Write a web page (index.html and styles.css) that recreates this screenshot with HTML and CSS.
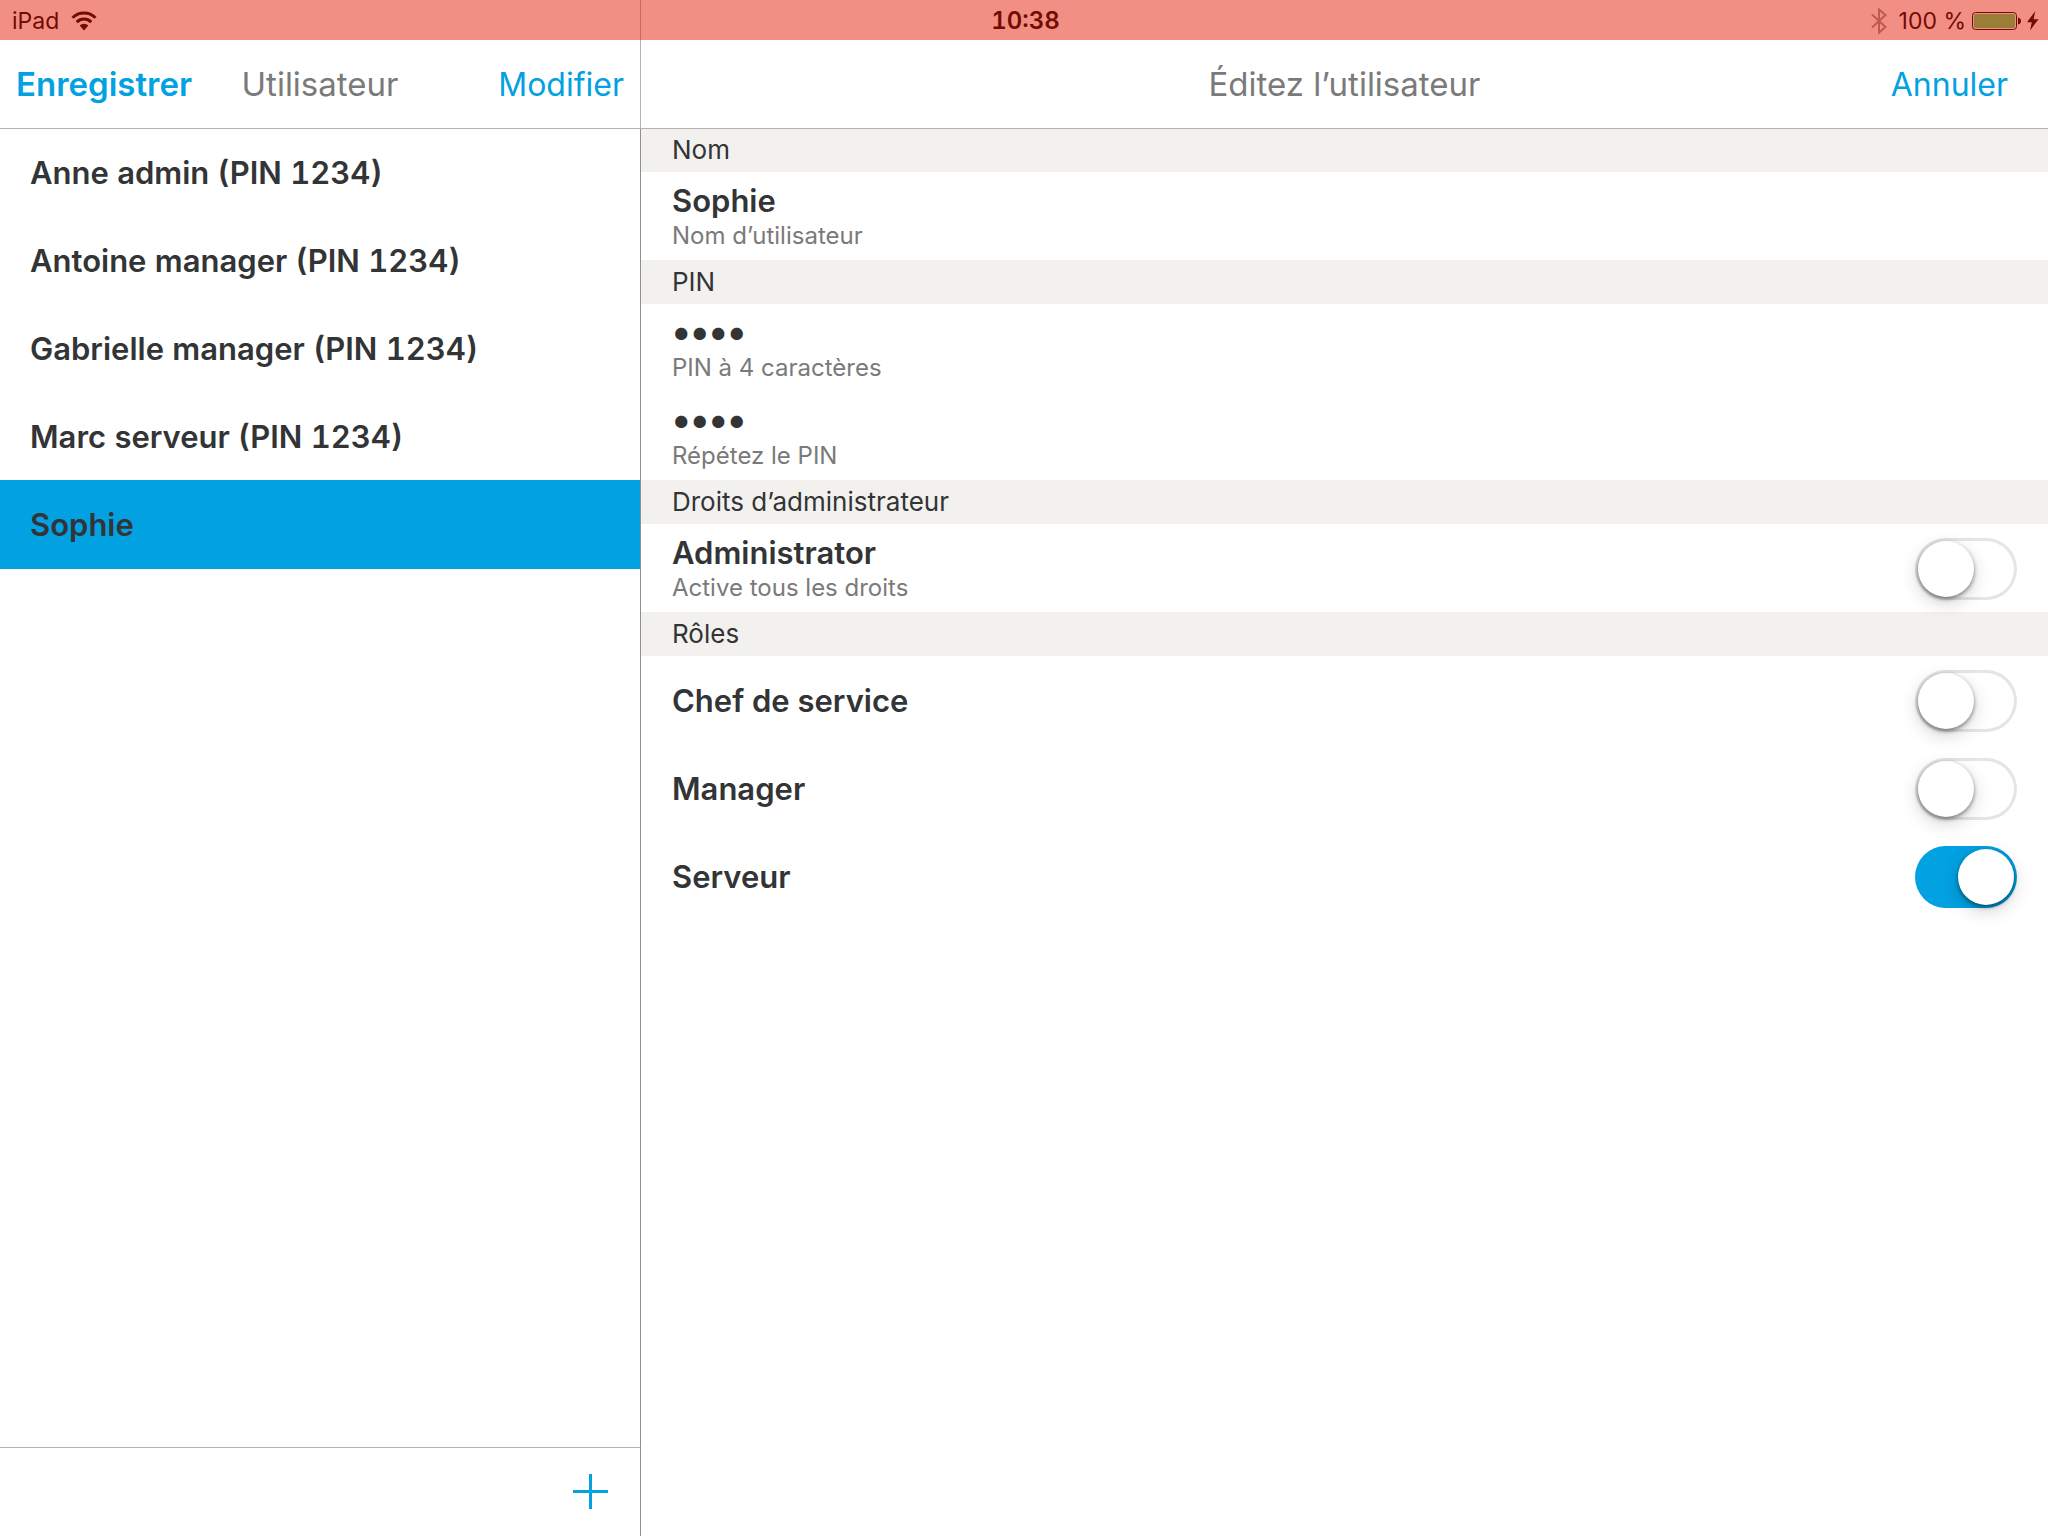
FILE: index.html
```html
<!DOCTYPE html>
<html lang="fr">
<head>
<meta charset="utf-8">
<meta name="viewport" content="width=device-width, initial-scale=1">
<title>Utilisateur</title>
<link rel="stylesheet" href="styles.css">
</head>
<body>
<div class="app">
  <div class="status-bar">
    <div class="status-left">
      <span>iPad</span>
      <svg class="wifi" viewBox="0 0 26 20" width="26" height="20" aria-hidden="true">
        <g fill="none" stroke="currentColor" stroke-width="3">
          <path d="M1.500 6.700a16.400 16.400 0 0 1 23 0"/>
          <path d="M5.700 11.100a10.400 10.400 0 0 1 14.600 0"/>
        </g>
        <path fill="currentColor" d="M8.600 14.600a6.400 6.400 0 0 1 8.800 0L13 19.400z"/>
      </svg>
    </div>
    <time class="clock">10:38</time>
    <div class="status-right">
      <svg class="bluetooth" viewBox="0 0 16 28" width="16" height="28" aria-hidden="true">
        <path fill="none" stroke="currentColor" stroke-width="2" d="M1 7.500l13.500 12.500L8 25.500V2.500l6.500 5.500L1 20.500"/>
      </svg>
      <span>100 %</span>
      <svg class="battery" viewBox="0 0 50 20" width="50" height="20" aria-hidden="true">
        <rect x="0.500" y="1.500" width="44" height="17" rx="3" fill="none" stroke="currentColor"/>
        <rect x="2" y="3" width="41" height="14" rx="1.500" fill="#997e38"/>
        <path fill="currentColor" d="M46 6.500c4 .5 4 6.500 0 7z"/>
      </svg>
      <svg class="bolt" viewBox="0 0 12 20" width="12" height="20" aria-hidden="true">
        <path fill="currentColor" d="M8.300 0L0 11.200h4.800L3 19.500l8.600-11.300H6.600z"/>
      </svg>
    </div>
  </div>

  <aside class="master">
    <header class="nav-bar">
      <button class="nav-button strong" type="button">Enregistrer</button>
      <h1 class="nav-title">Utilisateur</h1>
      <button class="nav-button end" type="button">Modifier</button>
    </header>
    <ul class="user-list">
      <li><button class="user" type="button">Anne admin (PIN 1234)</button></li>
      <li><button class="user" type="button">Antoine manager (PIN 1234)</button></li>
      <li><button class="user" type="button">Gabrielle manager (PIN 1234)</button></li>
      <li><button class="user" type="button">Marc serveur (PIN 1234)</button></li>
      <li><button class="user selected" type="button" aria-current="true">Sophie</button></li>
    </ul>
    <footer class="toolbar">
      <button class="add" type="button" aria-label="Ajouter">
        <svg viewBox="0 0 35 35" width="35" height="35" aria-hidden="true">
          <path fill="currentColor" d="M16 0h3v16h16v3H19v16h-3V19H0v-3h16z"/>
        </svg>
      </button>
    </footer>
  </aside>

  <main class="detail">
    <header class="nav-bar">
      <h2 class="nav-title">Éditez l’utilisateur</h2>
      <button class="nav-button end" type="button">Annuler</button>
    </header>
    <form class="form">
      <h3 class="section">Nom</h3>
      <div class="row field">
        <input class="value" id="name" type="text" value="Sophie">
        <label class="hint" for="name">Nom d’utilisateur</label>
      </div>
      <h3 class="section">PIN</h3>
      <div class="row field">
        <input class="value pin" id="pin" type="password" value="1234">
        <label class="hint" for="pin">PIN à 4 caractères</label>
      </div>
      <div class="row field">
        <input class="value pin" id="pin-repeat" type="password" value="1234">
        <label class="hint" for="pin-repeat">Répétez le PIN</label>
      </div>
      <h3 class="section">Droits d’administrateur</h3>
      <label class="row option">
        <span class="field">
          <span class="value">Administrator</span>
          <span class="hint">Active tous les droits</span>
        </span>
        <input class="switch" type="checkbox" role="switch">
      </label>
      <h3 class="section">Rôles</h3>
      <label class="row option">
        <span class="value">Chef de service</span>
        <input class="switch" type="checkbox" role="switch">
      </label>
      <label class="row option">
        <span class="value">Manager</span>
        <input class="switch" type="checkbox" role="switch">
      </label>
      <label class="row option">
        <span class="value">Serveur</span>
        <input class="switch" type="checkbox" role="switch" checked>
      </label>
    </form>
  </main>
</div>
</body>
</html>
```
FILE: styles.css
```css
:root {
  --accent: #02a1e2;
  --text: #323436;
  --muted: #7a7a7a;
  --line: #b2b2b2;
  --divider: #8e8e93;
  --section: #f3f1ee;
}

* {
  box-sizing: border-box;
}

body {
  margin: 0;
  background: #fff;
  color: var(--text);
  font-family: Inter, "Liberation Sans", sans-serif;
}

button,
input {
  margin: 0;
  padding: 0;
  border: 0;
  background: none;
  color: inherit;
  font: inherit;
}

.app {
  position: relative;
  display: grid;
  grid-template-columns: 641px 1fr;
  min-height: 100vh;
  padding-top: 40px;
  /* the pane divider, seen through the status bar */
  background: linear-gradient(var(--line), var(--line)) 640px 0 / 1px 40px no-repeat;
}

/* The tinted status bar lies over both panes. */
.status-bar {
  position: absolute;
  inset: 0 0 auto;
  display: grid;
  grid-template-columns: 1fr auto 1fr;
  align-items: center;
  height: 40px;
  padding: 0 9px 0 12px;
  background: rgba(229, 31, 9, 0.5);
  color: #730b03;
  font-size: 23px;
  line-height: 42px;
}

.status-left,
.status-right {
  display: flex;
  align-items: center;
  height: 40px;
}

.wifi {
  margin-left: 12px;
}

.clock {
  font-size: 24px;
  font-weight: 600;
  font-variant-numeric: tabular-nums;
}

.status-right {
  justify-content: flex-end;
}

.bluetooth {
  margin-right: 12px;
  opacity: 0.4;
}

.battery {
  margin: 0 5px 0 6px;
}

.master,
.detail {
  display: flex;
  flex-direction: column;
  min-width: 0;
}

.master > * {
  border-right: 1px solid var(--divider);
}

.nav-bar {
  display: grid;
  grid-template-columns: 1fr auto 1fr;
  align-items: center;
  height: 89px;
  border-bottom: 1px solid var(--line);
  font-size: 33px;
}

.master .nav-bar {
  padding: 0 16px;
  border-right-color: var(--line);
}

.detail .nav-bar {
  padding: 0 40px;
}

.nav-title {
  grid-column: 2;
  margin: 0;
  color: var(--muted);
  font-size: inherit;
  font-weight: 400;
}

.nav-button {
  justify-self: start;
  color: var(--accent);
}

.nav-button.strong {
  font-weight: 600;
}

.nav-button.end {
  justify-self: end;
  font-size: 32px;
}

.user-list {
  flex: 1;
  margin: 0;
  padding: 0;
  list-style: none;
}

.user {
  display: block;
  width: 100%;
  height: 88px;
  padding: 0 30px;
  font-size: 31px;
  font-weight: 600;
  font-variant-numeric: tabular-nums;
  text-align: left;
}

li:first-child .user {
  height: 87px;
}

.user.selected {
  height: 89px;
  background: var(--accent);
}

.toolbar {
  display: flex;
  align-items: center;
  justify-content: flex-end;
  height: 89px;
  padding: 0 32px 1px 0;
  border-top: 1px solid var(--line);
}

.add {
  display: flex;
  color: var(--accent);
}

.section {
  height: 44px;
  margin: 0;
  padding: 0 31px;
  background: var(--section);
  font-size: 26px;
  font-weight: 400;
  line-height: 44px;
}

.section:first-child {
  height: 43px;
  line-height: 42px;
}

.row {
  height: 88px;
  padding: 2px 31px 0;
}

.field {
  display: flex;
  flex-direction: column;
  justify-content: center;
}

.option {
  display: flex;
  align-items: center;
  justify-content: space-between;
}

.value {
  height: 38px;
  font-size: 31px;
  font-weight: 600;
  line-height: 38px;
}

.value.pin {
  padding-bottom: 6px;
  font-size: 39px;
  font-weight: 700;
  line-height: 32px;
}

.hint {
  color: var(--muted);
  font-size: 24px;
  line-height: 32px;
}

.switch {
  appearance: none;
  display: flex;
  width: 102px;
  height: 62px;
  padding: 3px;
  border-radius: 31px;
  box-shadow: inset 0 0 0 3px #e5e5e5;
}

.switch::before {
  content: "";
  width: 56px;
  height: 56px;
  border-radius: 50%;
  background: #fff;
  box-shadow: 0 2px 4px rgba(0, 0, 0, 0.45), 0 6px 18px rgba(0, 0, 0, 0.18);
}

.switch:checked {
  justify-content: flex-end;
  background: var(--accent);
  box-shadow: none;
}
```
